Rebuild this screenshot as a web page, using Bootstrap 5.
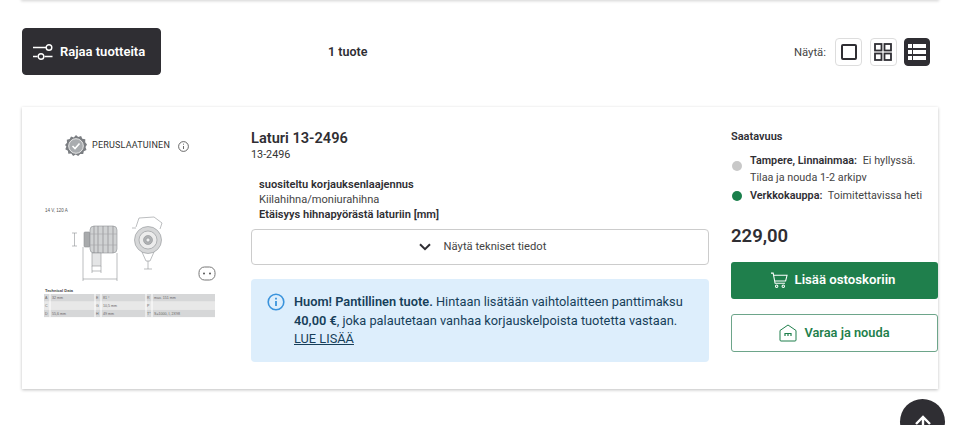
<!DOCTYPE html>
<html lang="fi"><head><meta charset="utf-8"><title>Laturi 13-2496</title>
<link rel="stylesheet" href="https://cdn.jsdelivr.net/npm/bootstrap@5.3.0/dist/css/bootstrap.min.css">
<style>
html,body{height:425px;overflow:hidden}
body{font-family:Roboto,"Liberation Sans",sans-serif;color:#2f2e33;background:#fff;position:relative}
.top-strip{height:0;margin:0 22px;box-shadow:0 0 3px 1px rgba(0,0,0,.22)}
.shell{padding:28px 22px 0}
.tools{height:47px}
.filter-btn{width:139px;height:47px;background:#2f2e33;border-color:#2f2e33;color:#fff;font-size:13px;font-weight:600;border-radius:4px;padding:1px 0 0 10px;gap:7px}
.filter-btn:hover{background:#2f2e33;color:#fff}
.count{margin-left:167px;font-size:12.500px;font-weight:600;padding-top:2px}
.show-lbl{font-size:11.300px;color:#444;margin-right:9px;padding-top:3px}
.view-btn{width:27px;height:28px;padding:0;border:1px solid #ddd;border-radius:4px;background:#fff;margin-left:7.500px}
.view-btn.first{margin-left:0}
.view-btn.on{background:#2f2e33;border-color:#2f2e33;width:26px}
.prod{margin-top:32px;height:282px;border:0;border-radius:0;box-shadow:0 1px 3px rgba(0,0,0,.25)}
.pic-col{width:229px;padding:28px 14px 0 22px}
.grade{font-size:9px;letter-spacing:.2px;color:#333;gap:5px;padding-left:21px;margin-bottom:48px}
.grade .nfo{margin-left:3px}
.pic{display:block}
.mid-col{width:458px;padding-top:22px}
.ttl{font-size:14.600px;font-weight:600;line-height:18px;margin:0}
.sku{font-size:10.800px;line-height:14px;margin-top:1px;color:#333}
.specs{margin:15px 0 0;padding-left:8px;font-size:11.100px;line-height:15px;color:#444}
.specs b{font-weight:600;color:#2f2e33;display:block;font-size:11.100px}
.tech-btn{height:36px;margin-top:7px;width:100%;border:1px solid #ccc;border-radius:4px;background:#fff;font-size:11.200px;color:#444;gap:13px;padding:0 0 0 5px}
.note{margin-top:14px;height:83px;background:#ddeefc;border-radius:4px;padding:14px 16px 0;gap:9px;font-size:12.800px;line-height:18.600px;color:#173f5a;border:0;margin-bottom:0}
.note b{font-weight:600}
.note a{color:#173f5a;display:block}
.note svg{flex:none}
.side-col{width:207px;margin-left:22px;padding-top:23px}
.side-h{font-size:11px;font-weight:600;line-height:14px}
.stock{font-size:10.800px;line-height:16.500px;color:#444;gap:8px;padding-left:1px}
.stock b{font-weight:600;color:#2f2e33;margin-right:3px}
.st1{margin-top:9px}
.st2{margin-top:2px}
.dot{width:10px;height:10px;border-radius:50%;flex:none;margin-top:8px}
.dot-grey{background:#c8c8c8}
.dot-green{background:#1a7f4b;margin-top:3px}
.price{font-size:18.500px;font-weight:600;line-height:24px;margin-top:19px}
.buy{height:37px;width:100%;margin-top:14px;background:#1f7f4c;border:0;border-radius:3px;color:#fff;font-size:13.200px;font-weight:600;gap:7px;padding:0 3px 0 0}
.buy:hover{background:#1f7f4c;color:#fff}
.reserve{height:38px;width:100%;margin-top:15px;background:#fff;border:1px solid #6da58a;border-radius:3px;color:#1f7f4c;font-size:12.800px;font-weight:600;gap:7px;padding:0}
.reserve:hover{background:#fff;color:#1f7f4c}
.to-top{position:absolute;left:900px;top:399px;width:45px;height:45px;border-radius:50%;background:#2f2e33;border:0;padding:16px 0 0;display:flex;justify-content:center;align-items:flex-start}
.cap{font:700 4px "Liberation Sans",sans-serif;fill:#444}
.tiny{font:3.600px "Liberation Sans",sans-serif;fill:#666}
</style></head>
<body>
<div class="top-strip"></div>
<main class="shell">
  <div class="tools d-flex align-items-center">
    <button class="btn filter-btn d-flex align-items-center" type="button">
      <svg width="20" height="16" viewBox="0 0 20 16" fill="none" stroke="#fff" stroke-width="1.400"><path d="M0 3.500h13M0 12.500h4.500M11.500 12.500h8"/><circle cx="16" cy="3.500" r="2.800"/><circle cx="8" cy="12.500" r="2.800"/></svg>
      <span>Rajaa tuotteita</span>
    </button>
    <span class="count">1 tuote</span>
    <div class="ms-auto d-flex align-items-center me-2">
      <span class="show-lbl">Näytä:</span>
      <button class="view-btn first d-flex align-items-center justify-content-center" type="button" aria-label="Yksi"><svg width="16" height="16" viewBox="0 0 16 16" fill="none" stroke="#2f2e33" stroke-width="2"><rect x="1" y="1" width="14" height="14" rx="1"/></svg></button>
      <button class="view-btn d-flex align-items-center justify-content-center" type="button" aria-label="Ruudukko"><svg width="18" height="18" viewBox="0 0 18 18" fill="none" stroke="#2f2e33" stroke-width="1.800"><rect x="1" y="1" width="6.500" height="6.500"/><rect x="10.500" y="1" width="6.500" height="6.500"/><rect x="1" y="10.500" width="6.500" height="6.500"/><rect x="10.500" y="10.500" width="6.500" height="6.500"/></svg></button>
      <button class="view-btn on d-flex align-items-center justify-content-center" type="button" aria-label="Lista"><svg width="18" height="16" viewBox="0 0 18 16" fill="#fff"><rect x="0" y="0" width="4" height="4"/><rect x="5" y="0" width="13" height="4"/><rect x="0" y="6" width="4" height="4"/><rect x="5" y="6" width="13" height="4"/><rect x="0" y="12" width="4" height="4"/><rect x="5" y="12" width="13" height="4"/></svg></button>
    </div>
  </div>

  <section class="card prod flex-row">
    <div class="pic-col">
      <div class="grade d-flex align-items-center">
        <svg width="22" height="22" viewBox="0 0 22 22"><path d="M11 0l2.200 2 2.900-.9 1.200 2.700 3 .4-.1 3L22 9.500l-1.500 2.600 1 2.800-2.700 1.300-.6 2.900-3-.2-2 2.200-2.500-1.600-2.600 1.500-1.800-2.400-3 .1-.4-3-2.600-1.500 1.100-2.800L0 9.900l2-2.200-.2-3 2.900-.6 1.300-2.700 2.800 1z" fill="#7b7e82"/><circle cx="11" cy="11" r="7.300" fill="#a9acaf" stroke="#e8e8e8" stroke-width="1"/><path d="M7.500 11l2.500 2.500 4.500-5" fill="none" stroke="#fff" stroke-width="1.600"/></svg>
        <span>PERUSLAATUINEN</span>
        <svg class="nfo" width="11" height="11" viewBox="0 0 11 11" fill="none" stroke="#444" stroke-width=".8"><circle cx="5.500" cy="5.500" r="4.900"/><path d="M5.500 5v3M5.500 2.700v1"/></svg>
      </div>
      <svg class="pic" width="172" height="116" viewBox="0 0 172 116" fill="none" stroke="#8f9295" stroke-width=".6">
        <text class="tiny" x="1" y="7" stroke="none" style="font-size:4.500px;fill:#555">14 V, 120 A</text>
        <path d="M28 28h5M30.500 28v13M28 41h5"/>
        <rect x="40" y="27" width="6" height="15" rx="1" fill="#a8aaac"/>
        <rect x="46" y="21" width="27" height="27" rx="4" fill="#d0d2d3"/>
        <path d="M50 21v27M54 21v27M59 21v27M64 21v27M69 21v27" stroke="#808285"/>
        <path d="M46 29h27M46 40h27" stroke="#a4a6a8"/>
        <rect x="48" y="48" width="9" height="13" fill="#e4e5e6"/>
        <path d="M39 42v34M73 48v28M39 74h34M48 61v7M57 61v7M48 66h9"/>
        <path d="M92 22l3-9 15-1 8 6-2 6M92 23h-4"/>
        <circle cx="104" cy="35" r="13.500" fill="#d6d7d8"/><circle cx="104" cy="35" r="9" fill="#ececec"/><circle cx="104" cy="35" r="4.500" fill="#b0b2b4"/><circle cx="104" cy="35" r="2" fill="#eee"/>
        <path d="M98 47l4 9h4l4-9M100 64h8M104 56v8"/>
        <rect x="155" y="62" width="16" height="13" rx="5.500" stroke-width="1" stroke="#777"/><circle cx="160" cy="68.500" r="1" fill="#555" stroke="none"/><circle cx="166" cy="68.500" r="1" fill="#555" stroke="none"/>
        <text class="cap" x="1" y="87" stroke="none">Technical Data</text>
        <g stroke="none" fill="#d6d7d8"><rect x="0" y="89" width="171" height="7.700"/><rect x="0" y="104.400" width="171" height="7.700"/></g>
        <g stroke="none" fill="#e8e8e8"><rect x="0" y="96.700" width="171" height="7.700"/></g>
        <g stroke="#fff" stroke-width="1"><path d="M6 89v23M51 89v23M57 89v23M102 89v23M108 89v23"/></g>
        <g stroke="none">
          <text class="tiny" x="1" y="94">A</text><text class="tiny" x="8" y="94">32 mm</text><text class="tiny" x="52" y="94">E</text><text class="tiny" x="59" y="94">81 °</text><text class="tiny" x="103" y="94">R</text><text class="tiny" x="110" y="94">max. 151 mm</text>
          <text class="tiny" x="1" y="102">C</text><text class="tiny" x="52" y="102">G</text><text class="tiny" x="59" y="102">10,5 mm</text><text class="tiny" x="103" y="102">P</text>
          <text class="tiny" x="1" y="110">D</text><text class="tiny" x="8" y="110">55,6 mm</text><text class="tiny" x="52" y="110">H</text><text class="tiny" x="59" y="110">49 mm</text><text class="tiny" x="103" y="110">T*</text><text class="tiny" x="110" y="110">S=1000, I, 2X98</text>
        </g>
      </svg>
    </div>

    <div class="mid-col">
      <h2 class="ttl">Laturi 13-2496</h2>
      <div class="sku">13-2496</div>
      <div class="specs"><b>suositeltu korjauksenlaajennus</b>Kiilahihna/moniurahihna<b>Etäisyys hihnapyörästä laturiin [mm]</b></div>
      <button class="tech-btn d-flex align-items-center justify-content-center" type="button">
        <svg width="12" height="8" viewBox="0 0 12 8" fill="none" stroke="#2f2e33" stroke-width="2"><path d="M1 1.200l5 5 5-5"/></svg>
        <span>Näytä tekniset tiedot</span>
      </button>
      <div class="note d-flex">
        <svg width="18" height="18" viewBox="0 0 18 18" fill="none" stroke="#3a93dc" stroke-width="1.600"><circle cx="9" cy="9" r="7.800"/><path d="M9 8v5M9 4.800v1.600" stroke-width="1.800"/></svg>
        <div><b>Huom! Pantillinen tuote.</b> Hintaan lisätään vaihtolaitteen panttimaksu<br><b>40,00 €</b>, joka palautetaan vanhaa korjauskelpoista tuotetta vastaan.<a href="#">LUE LISÄÄ</a></div>
      </div>
    </div>

    <aside class="side-col">
      <div class="side-h">Saatavuus</div>
      <div class="d-flex stock st1"><span class="dot dot-grey"></span><div><b>Tampere, Linnainmaa:</b> Ei hyllyssä.<br>Tilaa ja nouda 1-2 arkipv</div></div>
      <div class="d-flex stock st2"><span class="dot dot-green"></span><div><b>Verkkokauppa:</b> Toimitettavissa heti</div></div>
      <div class="price">229,00</div>
      <button class="btn buy d-flex align-items-center justify-content-center" type="button">
        <svg width="17" height="17" viewBox="0 0 18 17" fill="none" stroke="#fff" stroke-width="1.100"><path d="M0 .7h2.300l2 10.800h10.500M3 3h14l-1.500 6H4"/><circle cx="6" cy="14.500" r="1.300"/><circle cx="13" cy="14.500" r="1.300"/></svg>
        <span>Lisää ostoskoriin</span>
      </button>
      <button class="btn reserve d-flex align-items-center justify-content-center" type="button">
        <svg width="18" height="18" viewBox="0 0 18 18" fill="none" stroke="#1f7f4c" stroke-width="1"><path d="M1 6.500L9 1l8 5.500V16a1 1 0 0 1-1 1H2a1 1 0 0 1-1-1z"/><path d="M6 12v-2.500h6V12M9 9.500V12" stroke-width="1.200"/></svg>
        <span>Varaa ja nouda</span>
      </button>
    </aside>
  </section>
</main>
<button class="to-top" type="button" aria-label="Ylös"><svg width="20" height="18" viewBox="0 0 20 18" fill="none" stroke="#fff" stroke-width="2.400"><path d="M10 18V2M3 9l7-7 7 7"/></svg></button>
</body></html>
